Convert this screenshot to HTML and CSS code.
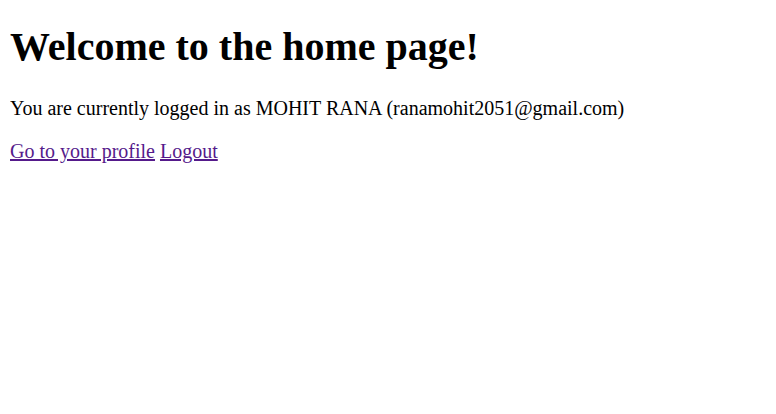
FILE: index.html
```html
<!DOCTYPE html>
<html lang="en">
<head>
<meta charset="utf-8">
<title>Home</title>
<link rel="stylesheet" href="styles.css">
</head>
<body class="page">
<h1 class="title">Welcome to the home page!</h1>
<p class="text">You are currently logged in as MOHIT RANA (ranamohit2051@gmail.com)</p>
<p class="text"><a class="link" href="#profile">Go to your profile</a> <a class="link" href="#logout">Logout</a></p>
</body>
</html>
```
FILE: styles.css
```css
html { background: #fff; }
.page {
  margin: 10px;
  font-family: "Liberation Serif", "Times New Roman", serif;
  font-size: 20px;
  color: #000;
}
.title {
  font-size: 40px;
  font-weight: bold;
  margin: 13px 0 26.8px;
}
.text {
  margin: 20px 0;
}
.link {
  color: #551a8b;
  text-decoration: underline;
}
```
